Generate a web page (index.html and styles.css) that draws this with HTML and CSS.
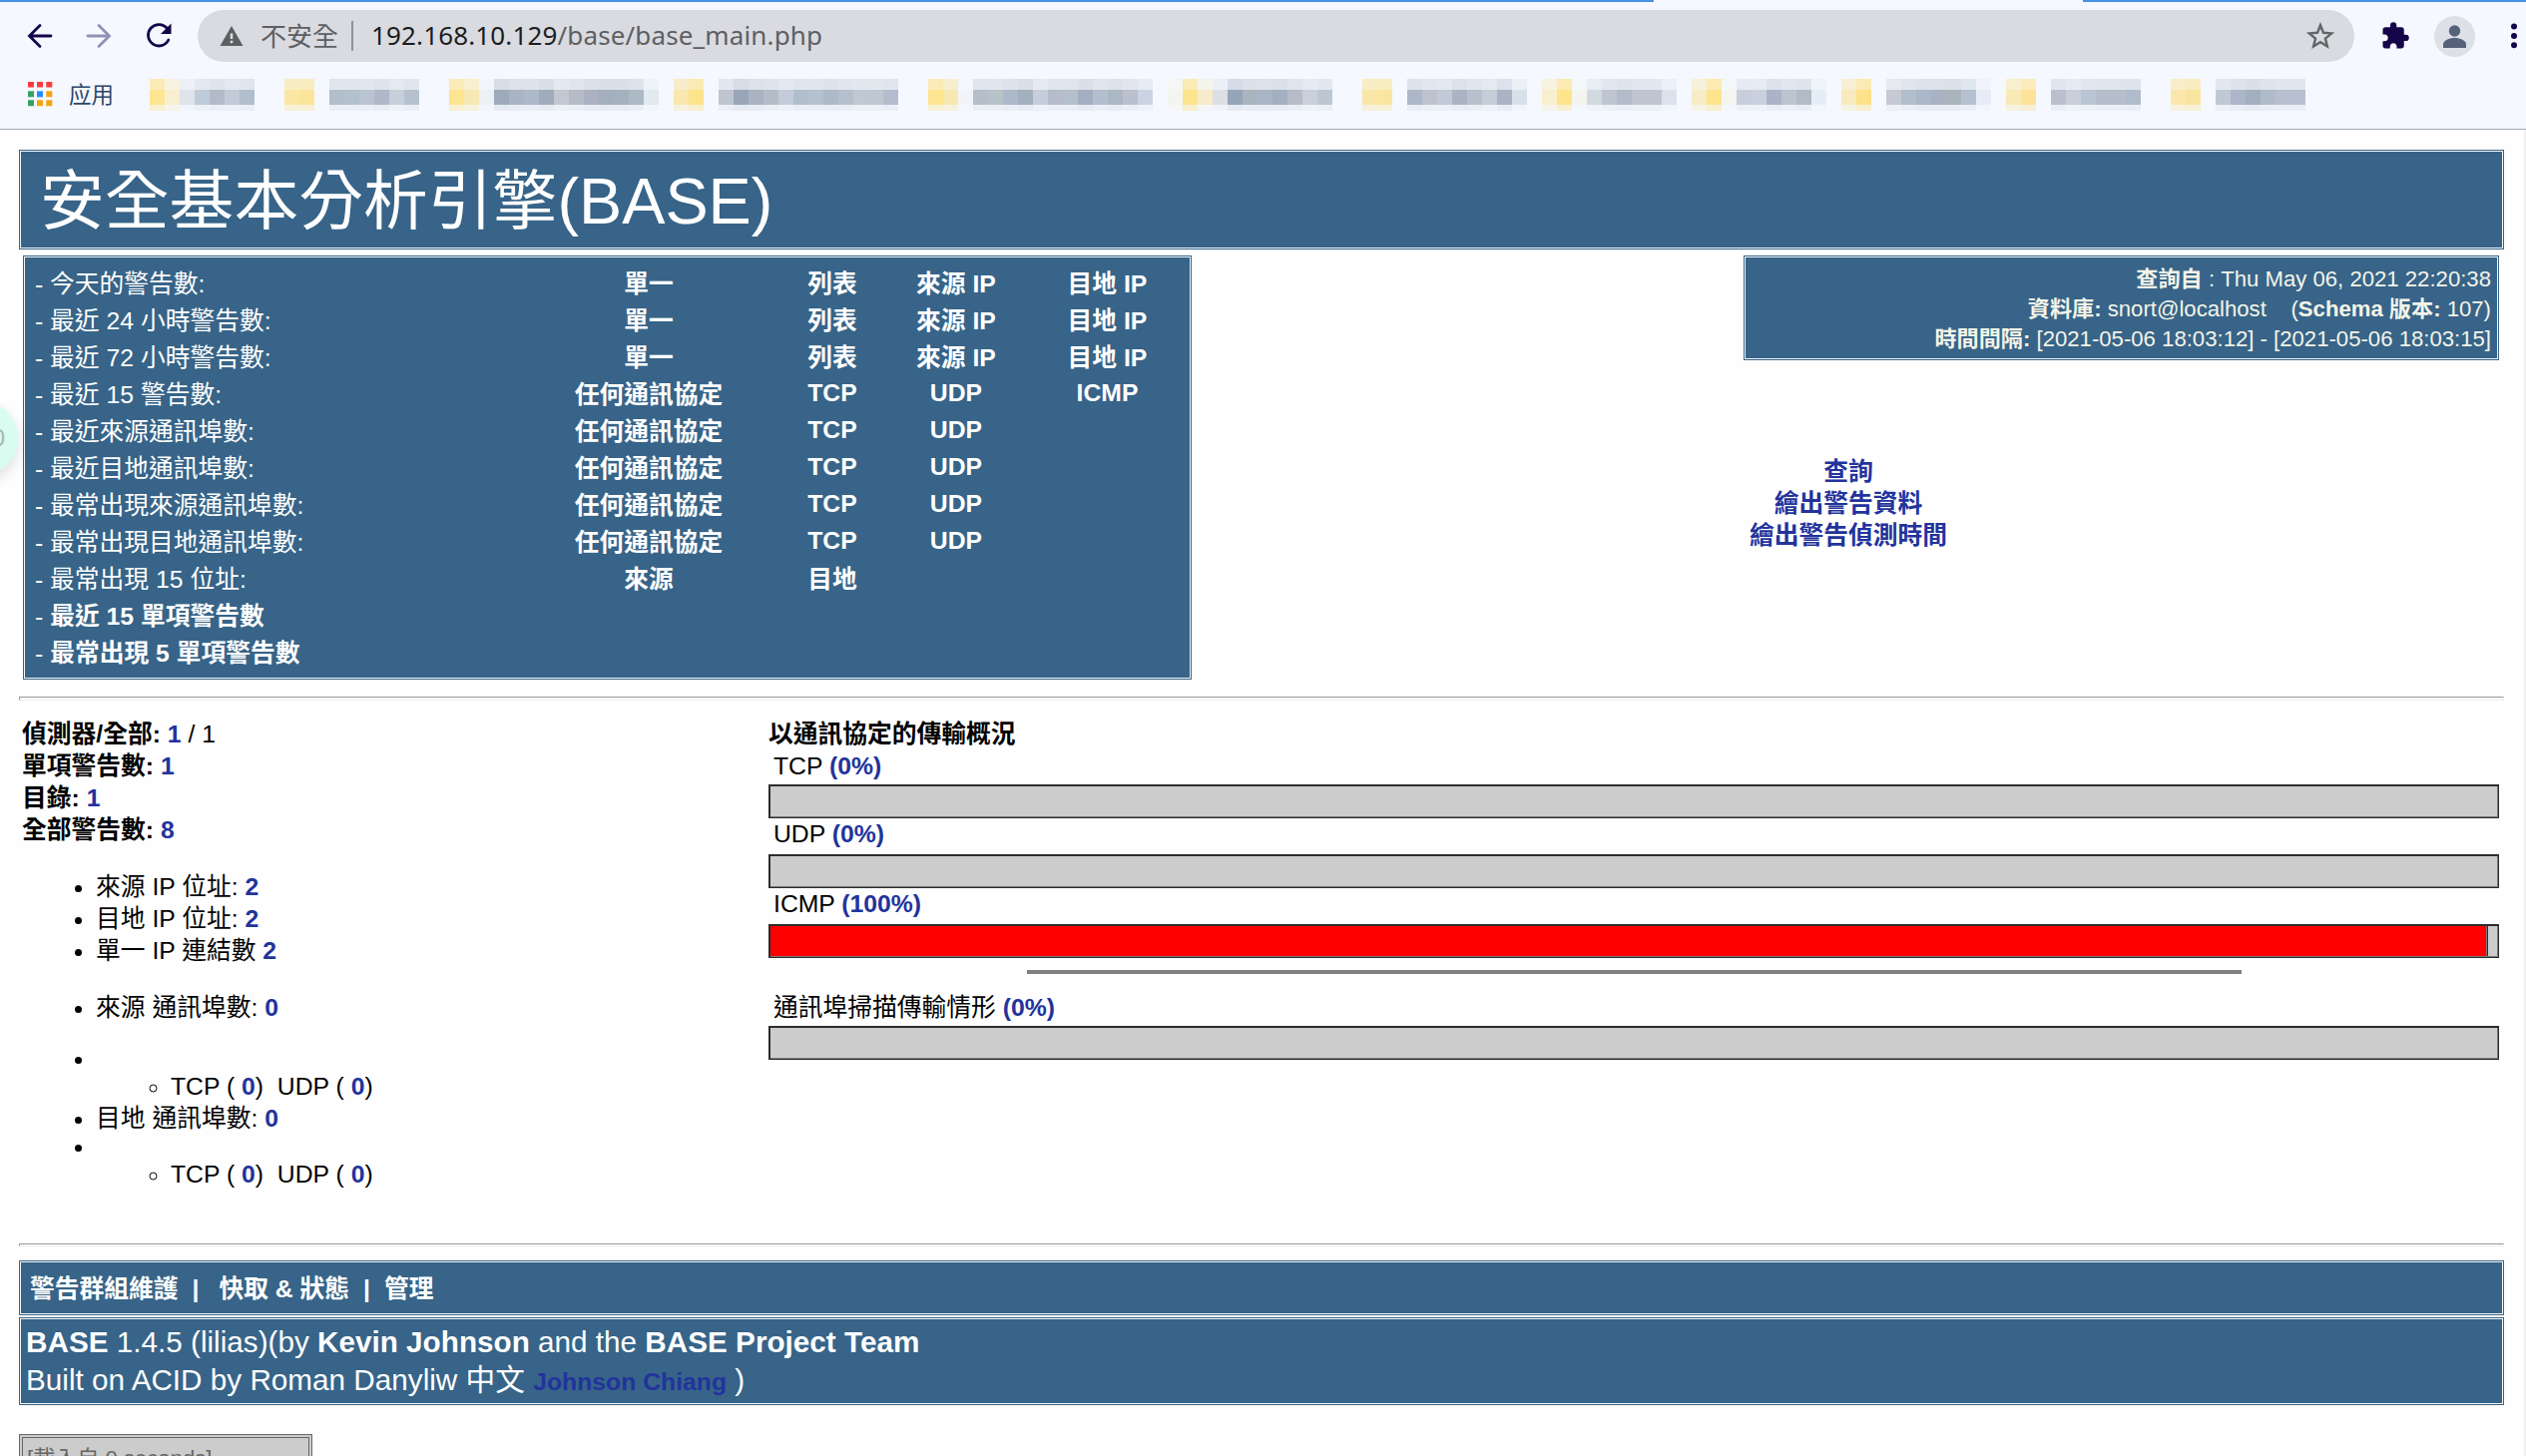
FILE: index.html
```
<!DOCTYPE html>
<html lang="zh-Hant">

   <head>
      <title>安全基本分析引擎(BASE)</title>
      <meta charset="utf-8">
      <link rel="stylesheet" href="styles.css">
   </head>

   <body>
      <div class="browser">
         <div class="loadbar"><span></span><span></span></div>
         <div class="toolbar">
            <svg class="icon-back" width="28" height="28" viewBox="0 0 28 28"><path d="M25 14H4M14 3.500L3.500 14L14 24.500"/></svg>
            <svg class="icon-forward" width="28" height="28" viewBox="0 0 28 28"><path d="M3 14H24M14 3.500L24.500 14L14 24.500"/></svg>
            <svg class="icon-reload" width="30" height="30" viewBox="0 0 30 30"><path class="arc" d="M23.500 7.500A10.700 10.700 0 1 0 24.800 19"/><path class="tip" d="M27.500 2.500V13H17z"/></svg>
            <div class="omnibox">
               <svg class="icon-warn" width="24" height="22" viewBox="0 0 24 22"><path d="M12 1L23.500 21H.5z"/><path class="mark" d="M10.700 8.500h2.600v5.500h-2.600zM10.700 15.700h2.600v2.600h-2.600z"/></svg>
               <span class="insecure">不安全</span>
               <span class="divider"></span>
               <span class="url"><b>192.168.10.129</b>/base/base_main.php</span>
               <svg class="icon-star" width="28" height="28" viewBox="0 0 28 28"><path d="M14 3.200L17 10.800L25.200 11.400L18.900 16.600L20.900 24.500L14 20.200L7.100 24.500L9.100 16.600L2.800 11.400L11 10.800z"/></svg>
            </div>
            <svg class="icon-puzzle" width="30" height="30" viewBox="0 0 24 24"><path d="M20.500 11H19V7c0-1.100-.9-2-2-2h-4V3.500a2.500 2.500 0 0 0-5 0V5H4c-1.100 0-1.990.9-1.990 2v3.800H3.500c1.490 0 2.700 1.210 2.700 2.700s-1.210 2.700-2.700 2.700H2V20c0 1.100.9 2 2 2h3.800v-1.500c0-1.490 1.210-2.700 2.700-2.700s2.700 1.210 2.700 2.700V22H17c1.100 0 2-.9 2-2v-4h1.500a2.500 2.500 0 0 0 0-5z"/></svg>
            <svg class="icon-user" width="41" height="41" viewBox="0 0 41 41"><circle class="disc" cx="20.500" cy="20.500" r="20.500"/><circle cx="20.500" cy="15" r="5.700"/><path d="M9 32v-3.500c0-4 6-6.500 11.500-6.500S32 24.500 32 28.500V32z"/></svg>
            <svg class="icon-dots" width="8" height="26" viewBox="0 0 8 26"><circle cx="4" cy="3.500" r="3"/><circle cx="4" cy="13" r="3"/><circle cx="4" cy="22.300" r="3"/></svg>
         </div>
         <div class="bookmarks">
            <svg class="icon-apps" width="26" height="26" viewBox="0 0 26 26">
               <path fill="#fb3b3b" d="M1 1h6v5.500h-6zM10 1h6v5.500h-6zM19.300 1h6v5.500h-6z"/>
               <path fill="#34a262" d="M1 10.300h6v6h-6zM1 19.300h6v6h-6z"/>
               <path fill="#2490fc" d="M10 10.300h6v6h-6z"/>
               <path fill="#f5a50c" d="M19.300 10.300h6v6h-6zM10 19.300h6v6h-6zM19.300 19.300h6v6h-6z"/>
            </svg>
            <span class="apps">应用</span>
            <div class="mosaic" id="mosaic"></div>
         </div>
      </div>

      <div class="page">
         <div class="panel mainheader">安全基本分析引擎(BASE)</div>

         <div class="top">
            <div class="panel menu">
               <div class="row"><span>- 今天的警告數:</span><b>單一</b><b>列表</b><b>來源 IP</b><b>目地 IP</b></div>
               <div class="row"><span>- 最近 24 小時警告數:</span><b>單一</b><b>列表</b><b>來源 IP</b><b>目地 IP</b></div>
               <div class="row"><span>- 最近 72 小時警告數:</span><b>單一</b><b>列表</b><b>來源 IP</b><b>目地 IP</b></div>
               <div class="row"><span>- 最近 15 警告數:</span><b>任何通訊協定</b><b class="en">TCP</b><b class="en">UDP</b><b class="en">ICMP</b></div>
               <div class="row"><span>- 最近來源通訊埠數:</span><b>任何通訊協定</b><b class="en">TCP</b><b class="en">UDP</b></div>
               <div class="row"><span>- 最近目地通訊埠數:</span><b>任何通訊協定</b><b class="en">TCP</b><b class="en">UDP</b></div>
               <div class="row"><span>- 最常出現來源通訊埠數:</span><b>任何通訊協定</b><b class="en">TCP</b><b class="en">UDP</b></div>
               <div class="row"><span>- 最常出現目地通訊埠數:</span><b>任何通訊協定</b><b class="en">TCP</b><b class="en">UDP</b></div>
               <div class="row"><span>- 最常出現 15 位址:</span><b>來源</b><b>目地</b></div>
               <div class="row"><span>- <strong>最近 15 單項警告數</strong></span></div>
               <div class="row"><span>- <strong>最常出現 5 單項警告數</strong></span></div>
            </div>
            <div class="side">
               <div class="panel systemstats">
                  <b>查詢自</b> : Thu May 06, 2021 22:20:38<br>
                  <b>資料庫:</b> snort@localhost &nbsp;&nbsp; (<b>Schema 版本:</b> 107)<br>
                  <b>時間間隔:</b> [2021-05-06 18:03:12] - [2021-05-06 18:03:15]
               </div>
               <div class="links">
                  <a>查詢</a><br>
                  <a>繪出警告資料</a><br>
                  <a>繪出警告偵測時間</a>
               </div>
            </div>
         </div>

         <div class="rule"></div>

         <div class="summary">
            <div class="counts">
               <div><b>偵測器/全部:</b> <a>1</a> / 1</div>
               <div><b>單項警告數:</b> <a>1</a></div>
               <div><b>目錄:</b> <a>1</a></div>
               <div><b>全部警告數:</b> <a>8</a></div>
               <ul>
                  <li>來源 IP 位址: <a>2</a></li>
                  <li>目地 IP 位址: <a>2</a></li>
                  <li>單一 IP 連結數 <a>2</a></li>
                  <li class="spaced">來源 通訊埠數: <a>0</a></li>
                  <li class="short">&nbsp;
                     <ul><li>TCP ( <a>0</a>)&nbsp; UDP ( <a>0</a>)</li></ul>
                  </li>
                  <li>目地 通訊埠數: <a>0</a></li>
                  <li class="short">&nbsp;
                     <ul><li>TCP ( <a>0</a>)&nbsp; UDP ( <a>0</a>)</li></ul>
                  </li>
               </ul>
            </div>
            <div class="traffic">
               <div class="caption"><b>以通訊協定的傳輸概況</b></div>
               <div class="proto">TCP <a>(0%)</a></div>
               <div class="bar"></div>
               <div class="proto">UDP <a>(0%)</a></div>
               <div class="bar"></div>
               <div class="proto">ICMP <a>(100%)</a></div>
               <div class="bar"><div class="fill"></div></div>
               <div class="separator"></div>
               <div class="proto scan">通訊埠掃描傳輸情形 <a>(0%)</a></div>
               <div class="bar"></div>
            </div>
         </div>

         <div class="rule second"></div>

         <div class="panel footermenu"><b>警告群組維護</b><i>|</i><b>快取 &amp; 狀態</b><i>|</i><b>管理</b></div>
         <div class="panel footer">
            <b>BASE</b> 1.4.5 (lilias)(by <b>Kevin Johnson</b> and the <b>BASE Project Team</b><br>
            Built on ACID by Roman Danyliw 中文 <a>Johnson Chiang</a> )
         </div>
         <div class="loaded">[載入自 0 seconds]</div>
      </div>

      <div class="bubble">0</div>

      <script src="mosaic.js"></script>
   </body>

</html>
```
FILE: styles.css
```
body {
   margin: 0;
   height: 1459px;
   overflow: hidden;
   background-color: #fefefe;
   color: #000000;
   font-family: "Liberation Sans", "Noto Sans CJK TC", sans-serif;
   font-size: 24.75px;
   line-height: 32px;
   position: relative;
}

* {
   box-sizing: border-box;
}

a {
   color: #22339c;
   font-weight: bold;
}

/* browser bars */
.browser {
   height: 130px;
   background-color: #f5f8fe;
   border-bottom: 1px solid #a1a9b0;
   font-family: "Noto Sans", "Noto Sans CJK SC", sans-serif;
}

.loadbar {
   display: flex;
   justify-content: space-between;
   height: 2px;
}

.loadbar span {
   width: 1657px;
   background-color: #4790e5;
}

.loadbar span + span {
   width: 444px;
}

.toolbar {
   display: flex;
   align-items: center;
   height: 68px;
   padding: 0 7px 0 26px;
}

.toolbar svg {
   flex: none;
}

.icon-back,
.icon-forward {
   fill: none;
   stroke: #14054a;
   stroke-width: 2.8;
   stroke-linecap: round;
   margin-right: 31px;
}

.icon-forward {
   stroke: #9490b4;
}

.icon-reload {
   margin-right: 24px;
   fill: #14054a;
}

.icon-reload .arc {
   fill: none;
   stroke: #14054a;
   stroke-width: 2.8;
   stroke-linecap: round;
}

.omnibox {
   display: flex;
   align-items: center;
   width: 2161px;
   height: 52px;
   border-radius: 26px;
   background-color: #dadbe0;
   padding: 0 20px 0 22px;
   color: #5e5f63;
   font-size: 26px;
}

.icon-warn {
   fill: #5c5e61;
}

.icon-warn .mark {
   fill: #dadbe0;
}

.insecure {
   margin-left: 17px;
}

.divider {
   width: 2px;
   height: 30px;
   margin: 0 18px 0 13px;
   background-color: #929397;
}

.url {
   flex: 1;
   letter-spacing: 0.14px;
   padding-bottom: 2px;
}

.url b {
   font-weight: normal;
   color: #1c1d20;
}

.icon-star {
   fill: none;
   stroke: #636467;
   stroke-width: 2.4;
}

.icon-puzzle {
   fill: #14054a;
   margin: 0 24px 0 26px;
}

.icon-user {
   fill: #56617a;
}

.icon-user .disc {
   fill: #dde1e6;
}

.icon-dots {
   fill: #14054a;
   margin-left: 35px;
}

.bookmarks {
   display: flex;
   padding: 9px 0 0 27px;
}

.icon-apps {
   margin-top: 2px;
}

.apps {
   width: 81px;
   margin: 0 0 0 16px;
   font-size: 22.5px;
   color: #2d466a;
}

.mosaic {
   display: flex;
   height: 32px;
}

.cell {
   width: 15px;
}

.cell::before,
.cell::after,
.cell span {
   display: block;
   height: 11px;
   background-color: currentColor;
   opacity: 0.33;
   content: "";
}

.cell span {
   height: 15px;
   opacity: 1;
}

.cell::after {
   height: 6px;
   opacity: 0.16;
}

.cell.folder::before {
   opacity: 0.65;
}

.cell.folder::after {
   opacity: 0.4;
}

/* page */
.page {
   padding: 20px 20px 0 19px;
   border-right: 2px solid #f0f0f0;
   height: 1329px;
   overflow: hidden;
}

.panel {
   background-color: #376488;
   border: 1px solid #376488;
   box-shadow: inset 0 0 0 1px #f4f6f8;
   color: #ffffff;
}

.mainheader {
   height: 100px;
   padding-left: 20px;
   font-size: 64.8px;
   line-height: 102px;
}

.top {
   display: flex;
   justify-content: space-between;
   padding: 6px 5px 0 4px;
}

.menu {
   width: 1171px;
   height: 425px;
   padding-top: 9px;
}

.row {
   display: grid;
   grid-template-columns: 485px 260px 108px 140px 163px;
   padding-left: 11px;
   line-height: 37px;
   height: 37px;
}

.row b {
   text-align: center;
}

.row .en {
   line-height: 33px;
}

.side {
   width: 757px;
}

.systemstats {
   height: 105px;
   padding: 8px 7px;
   font-size: 22.15px;
   line-height: 30px;
   text-align: right;
   color: #f4f4e8;
}

.links {
   width: 210px;
   margin-top: 96px;
   text-align: center;
}

.rule {
   height: 4px;
   margin-top: 17px;
   border: 1px solid #999999;
   border-right-color: #eeeeee;
   border-bottom-color: #eeeeee;
}

.summary {
   display: flex;
   height: 544px;
   padding: 18px 5px 0 3px;
}

.counts {
   width: 748px;
}

.counts ul {
   margin: 25px 0 0;
   padding-left: 74px;
}

.counts li.spaced {
   margin: 25px 0 23px;
}

.counts li.short {
   line-height: 28px;
   margin-top: -2px;
}

.counts ul ul {
   margin: 0 0 2px;
   padding-left: 75px;
   list-style-type: circle;
}

.traffic {
   flex: 1;
}

.caption {
   height: 32px;
}

.proto {
   height: 36px;
   padding-left: 5px;
}

.caption + .proto {
   height: 34px;
}

.bar {
   height: 34px;
   background-color: #cccccc;
   border: solid #2c2c2c;
   border-width: 2px 1px 1px 2px;
   box-shadow: inset -1px -1px 0 #777777;
}

.fill {
   width: 1720px;
   height: 30px;
   background-color: #ff0000;
   border-right: 1px solid #777777;
   box-shadow: 1px 0 0 #2c2c2c;
}

.separator {
   width: 1217px;
   height: 4px;
   margin: 12px auto 18px;
   background-color: #808080;
}

.scan {
   height: 34px;
}

.rule.second {
   height: 3px;
   margin-top: 0;
}

.footermenu {
   height: 55px;
   margin-top: 14px;
   padding-left: 10px;
   line-height: 55px;
}

.footermenu i {
   font-style: normal;
   font-weight: bold;
   margin: 0 14px;
}

.footermenu i:nth-of-type(1) {
   margin-right: 20px;
}

.footer {
   height: 88px;
   margin-top: 2px;
   padding: 5px 6px;
   font-size: 29.7px;
   line-height: 38px;
}

.footer a {
   font-size: 24.75px;
}

.loaded {
   width: 294px;
   height: 50px;
   margin-top: 29px;
   padding: 5px 4px;
   background-color: #cccccc;
   border: 4px double #666666;
   color: #666666;
   font-size: 22.1px;
}

/* floating helper at the window edge */
.bubble {
   position: absolute;
   left: -58px;
   top: 401px;
   width: 76px;
   height: 76px;
   padding-right: 13px;
   border-radius: 38px;
   background-color: #d8fdf0;
   box-shadow: 0 6px 14px rgba(0, 0, 0, 0.12);
   color: #a9b5b0;
   font-size: 24px;
   line-height: 76px;
   text-align: right;
}
```
FILE: mosaic.js
```
// blurred bookmark strip, one colour per 15px cell, "-" is an empty cell
let strip = [
   "fde591 f8efd0 dfe3ea bfcbd8 b3bbc9 c3cad8 b1becd - -",
   "fbe7a3 fbe59c - b3becb b3c1cd bac3d0 b1b8ca c6cfda b5c1ce - -",
   "fde591 f7e9b5 edf1f3 9dabbb aab4c4 adbacb a0acba c2c7d1 b5bcc8 aab1c0 a3afbd a5b1bf adbac6 e2e9f0 -",
   "f9e7ae fde38b - bfc5cf 98a6b8 a9b3c1 b4bdc7 c3ccd8 b0becd b5c1cf aeb9c8 b6bfcd c0c8d4 bec8d2 b4bdce - -",
   "fde591 f7e8b3 f3f4f8 b4bfca b8c2c9 adb8ca a3b0bd c7cedb b5bcca b4c0cb a4adc2 b3bfcf abb7c3 bbc0ce ccd3e2 -",
   "f4f4f0 fee48d f6eccb dcdfe4 96a4b8 a9b4bf aab6c5 a4b0c2 b6bcc8 c9cfdb bdc7d3 - -",
   "fae6a8 f9e6a0 - acb8c7 bcc2ce c1cad6 acb4c4 b6c1cd c4cdd8 abb4c5 d8e1ea -",
   "f9efcf fee48b f4f5ef d2dae0 bec5d3 b3bdc9 bfc6d2 bfc6d2 dbe2ed -",
   "f7ecc5 fee48b f4f5ef c8cedb cad1de adb3c7 bac5d0 b1bcc8 e5eef7 -",
   "f8eabf fde28a - c7cad4 b2becb a9b7c8 a9b2c2 aab4bd b5c1d1 e6ebf5 -",
   "f9e9b5 fde39a - bac0ce c8ceda b9c5d3 b6becc b6becc b0bccb - -",
   "fbe7ae f9e59f - c0c8d5 acb6c8 a3afbf b0bbc8 b7bfd0 b7bfd0"
];

let mosaic = document.getElementById("mosaic");
for (let i = 0; i < strip.length; i++) {
   let colors = strip[i].split(" ");
   for (let j = 0; j < colors.length; j++) {
      let cell = document.createElement("div");
      cell.className = j < 2 ? "cell folder" : "cell";
      cell.style.color = colors[j] == "-" ? "transparent" : "#" + colors[j];
      cell.appendChild(document.createElement("span"));
      mosaic.appendChild(cell);
   }
}
```
